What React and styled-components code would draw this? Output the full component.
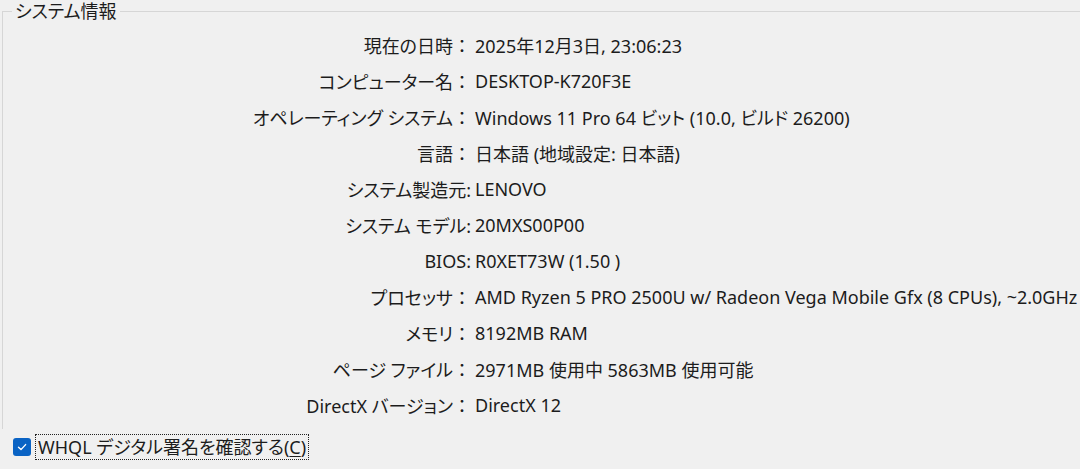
import React from "react";
import styled, { createGlobalStyle } from "styled-components";

const GlobalStyle = createGlobalStyle`
  html, body {
    margin: 0;
    background: #f0f0f0;
  }
  body {
    font-family: "Noto Sans", "Noto Sans CJK JP", sans-serif;
    font-size: 18px;
    color: #1c1c1c;
    font-feature-settings: "palt";
  }
`;

const Page = styled.div`
  width: 1080px;
  height: 469px;
  overflow: hidden;
`;

const Group = styled.fieldset`
  margin: 0 0 0 2px;
  padding: 5px 0 6px 0;
  border: 1px solid #d6d6d6;
  border-right: none;
  border-bottom: none;
  min-width: 0;
`;

const Legend = styled.legend`
  margin-left: 9px;
  padding: 0 3px;
  line-height: 22px;
`;

const InfoGrid = styled.div`
  display: grid;
  grid-template-columns: 468px 1fr;
  grid-auto-rows: 36px;
  column-gap: 4px;
  align-items: center;
  white-space: nowrap;
`;

const Label = styled.div`
  text-align: right;
`;

// full-width colon keeps its whole em box, as in the dialog
const Colon = styled.span`
  font-family: "Noto Sans CJK JP", sans-serif;
  font-feature-settings: normal;
`;

const Value = styled.div``;

const CheckRow = styled.label`
  display: flex;
  align-items: center;
  height: 36px;
  padding-left: 13px;
  gap: 5px;
`;

const Box = styled.span`
  width: 18px;
  height: 18px;
  border-radius: 3px;
  background: #0a63c4;
  display: flex;
  align-items: center;
  justify-content: center;
`;

const CheckText = styled.span`
  outline: 1px dotted #222;
  padding: 1px 2px;
  line-height: 22px;
`;

const Mnemonic = styled.u`
  text-underline-offset: 2px;
`;

const rows = [
  ["現在の日時", true, "2025年12月3日, 23:06:23"],
  ["コンピューター名", true, "DESKTOP-K720F3E"],
  ["オペレーティング システム", true, "Windows 11 Pro 64 ビット (10.0, ビルド 26200)"],
  ["言語", true, "日本語 (地域設定: 日本語)"],
  ["システム製造元", false, "LENOVO"],
  ["システム モデル", false, "20MXS00P00"],
  ["BIOS", false, "R0XET73W (1.50 )"],
  ["プロセッサ", true, "AMD Ryzen 5 PRO 2500U w/ Radeon Vega Mobile Gfx (8 CPUs), ~2.0GHz"],
  ["メモリ", true, "8192MB RAM"],
  ["ページ ファイル", true, "2971MB 使用中 5863MB 使用可能"],
  ["DirectX バージョン", true, "DirectX 12"],
];

export default function App() {
  return (
    <Page>
      <GlobalStyle />
      <Group>
        <Legend>システム情報</Legend>
        <InfoGrid>
          {rows.map(([label, wide, value]) => (
            <React.Fragment key={label}>
              <Label>
                {label}
                {wide ? <Colon>：</Colon> : ":"}
              </Label>
              <Value>{value}</Value>
            </React.Fragment>
          ))}
        </InfoGrid>
      </Group>
      <CheckRow>
        <Box>
          <svg width="12" height="12" viewBox="0 0 12 12" fill="none">
            <path d="M2.5 6.2 L5 8.6 L9.6 3.6" stroke="#fff" strokeWidth="1.4" strokeLinecap="round" strokeLinejoin="round" />
          </svg>
        </Box>
        <CheckText>
          WHQL デジタル署名を確認する(<Mnemonic>C</Mnemonic>)
        </CheckText>
      </CheckRow>
    </Page>
  );
}
